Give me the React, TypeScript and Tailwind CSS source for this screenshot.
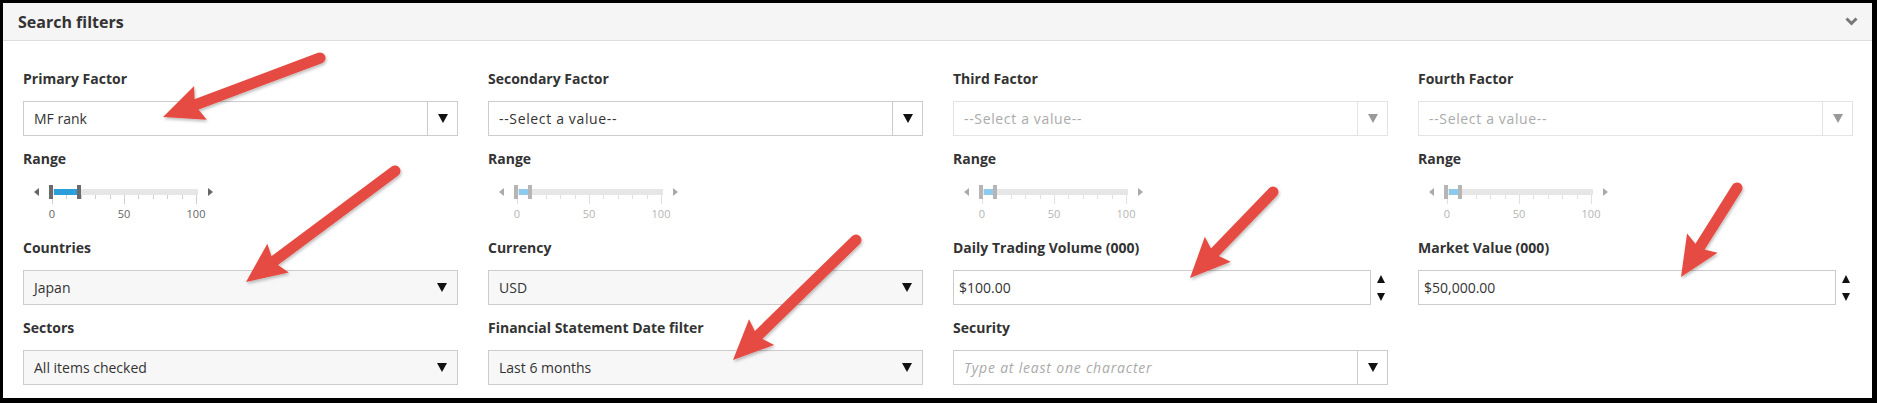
import React from "react";

const FONT = { fontFamily: '"Open Sans", "Liberation Sans", Arial, sans-serif' };

function Tri({ dir, color, w = 10, h = 9 }: { dir: "down" | "up" | "left" | "right"; color: string; w?: number; h?: number }) {
  let pts = "";
  if (dir === "down") pts = `0,0 ${w},0 ${w / 2},${h}`;
  if (dir === "up") pts = `0,${h} ${w},${h} ${w / 2},0`;
  if (dir === "left") pts = `${w},0 ${w},${h} 0,${h / 2}`;
  if (dir === "right") pts = `0,0 0,${h} ${w},${h / 2}`;
  return (
    <svg width={w} height={h} viewBox={`0 0 ${w} ${h}`} className="block shrink-0">
      <polygon points={pts} fill={color} />
    </svg>
  );
}

function Label({ children }: { children: React.ReactNode }) {
  return <div className="h-5 leading-5 text-[14px] font-bold text-[#333] mb-3 whitespace-nowrap">{children}</div>;
}

type Variant = "divider" | "disabled" | "gray";

function SelectBox({ value, variant, italic, wide }: { value: string; variant: Variant; italic?: boolean; wide?: boolean }) {
  const isGray = variant === "gray";
  const isDis = variant === "disabled";
  return (
    <div
      className={
        "h-[35px] flex items-stretch border " +
        (isDis ? "border-[#e3e3e3] bg-white" : isGray ? "border-[#cccccc] bg-[#f7f7f7]" : "border-[#cccccc] bg-white")
      }
    >
      <div
        className={
          "flex-1 flex items-center pl-[10px] text-[14px] whitespace-nowrap " +
          (italic ? "italic text-[#aaaaaa] tracking-[0.8px] " : isDis ? "text-[#aaaaaa] " : "text-[#333] ") +
          (wide ? "tracking-[0.65px]" : "")
        }
      >
        {value}
      </div>
      <div
        className={
          "w-[30px] flex items-center justify-center " +
          (isGray ? "" : isDis ? "border-l border-[#e3e3e3]" : "border-l border-[#cccccc]")
        }
      >
        <Tri dir="down" color={isDis ? "#999999" : "#111111"} w={10} h={9} />
      </div>
    </div>
  );
}

function NumberBox({ value }: { value: string }) {
  return (
    <div className="h-[35px] flex items-stretch">
      <div className="flex-1 border border-[#cccccc] bg-white flex items-center pl-[5px] text-[14px] text-[#333]">{value}</div>
      <div className="w-[17px] flex flex-col items-center justify-between pl-[2px] pt-[5px] pb-[4px]">
        <Tri dir="up" color="#111111" w={8} h={8} />
        <Tri dir="down" color="#111111" w={8} h={8} />
      </div>
    </div>
  );
}

function Slider({ enabled }: { enabled: boolean }) {
  const handle = enabled ? "#6b6b6b" : "#b5b5b5";
  const fill = enabled ? "#2b9fd9" : "#8ccbee";
  const arrow = enabled ? "#666666" : "#aaaaaa";
  const txt = enabled ? "#666666" : "#b5b5b5";
  const tickCol = enabled ? "#cfcfcf" : "#e0e0e0";
  const x0 = 29;
  const x1 = 173;
  const rightHandle = enabled ? 54 : 40;
  const ticks = Array.from({ length: 11 }, (_, i) => x0 + ((x1 - x0) * i) / 10);
  return (
    <svg width={200} height={56} viewBox="0 0 200 56" className="block" style={FONT}>
      <polygon points="16,19 16,27 11,23" fill={arrow} />
      <polygon points="185,19 185,27 190,23" fill={arrow} />
      <rect x={27} y={20} width={148} height={6} fill="#e6e6e6" />
      {ticks.map((t, i) => (
        <rect key={i} x={Math.round(t)} y={26} width={1} height={i % 5 === 0 ? 9 : 4} fill={tickCol} />
      ))}
      <rect x={31} y={20} width={rightHandle - 31} height={6} fill={fill} />
      <rect x={26} y={16} width={4} height={14} fill={handle} />
      <rect x={rightHandle} y={16} width={4} height={14} fill={handle} />
      <text x={x0} y={49} fontSize={11} fill={txt} textAnchor="middle">0</text>
      <text x={(x0 + x1) / 2} y={49} fontSize={11} fill={txt} textAnchor="middle">50</text>
      <text x={x1} y={49} fontSize={11} fill={txt} textAnchor="middle">100</text>
    </svg>
  );
}

function RangeField({ enabled }: { enabled: boolean }) {
  return (
    <div>
      <div className="h-5 leading-5 text-[14px] font-bold text-[#333]">Range</div>
      <Slider enabled={enabled} />
    </div>
  );
}

const ARROWS: [number, number, number, number][] = [
  [320, 58, 163, 117],
  [395, 171, 246, 282],
  [856, 240, 733, 360],
  [1273, 192, 1190, 278],
  [1737, 188, 1681, 277],
];

function RedArrows() {
  return (
    <svg width={1877} height={403} viewBox="0 0 1877 403" className="absolute left-0 top-0 pointer-events-none">
      <defs>
        <filter id="sh" x="-20%" y="-20%" width="140%" height="140%">
          <feDropShadow dx="1" dy="2" stdDeviation="1.5" floodColor="#000" floodOpacity="0.25" />
        </filter>
      </defs>
      {ARROWS.map(([tx, ty, hx, hy], i) => {
        const dx = hx - tx;
        const dy = hy - ty;
        const len = Math.hypot(dx, dy);
        const ux = dx / len;
        const uy = dy / len;
        const L = 40;
        const W = 18;
        const bx = hx - ux * L;
        const by = hy - uy * L;
        const px = -uy;
        const py = ux;
        const nx = bx + ux * 6;
        const ny = by + uy * 6;
        const pts = `${hx},${hy} ${bx + px * W},${by + py * W} ${nx},${ny} ${bx - px * W},${by - py * W}`;
        return (
          <g key={i} filter="url(#sh)">
            <line x1={tx} y1={ty} x2={bx + ux * 8} y2={by + uy * 8} stroke="#e54b42" strokeWidth={11} strokeLinecap="round" />
            <polygon points={pts} fill="#e54b42" />
          </g>
        );
      })}
    </svg>
  );
}

export default function App() {
  return (
    <div className="relative w-[1877px] h-[403px] bg-black pl-[3px] pt-[3px]" style={FONT}>
      <div className="w-[1869px] h-[395px] bg-white flex flex-col">
        <div className="h-[38px] shrink-0 bg-[#f5f5f5] border-b border-[#dddddd] flex items-center justify-between pl-[15px] pr-[14px]">
          <div className="text-[16px] font-bold text-[#333]">Search filters</div>
          <svg width={13} height={9} viewBox="0 0 13 9" className="block">
            <polyline points="1.5,1.5 6.5,6.5 11.5,1.5" fill="none" stroke="#777777" strokeWidth={3} />
          </svg>
        </div>
        <div className="grid grid-cols-4 gap-x-[30px] gap-y-[13px] pl-[20px] pr-[19px] pt-[28px]">
          <div>
            <Label>Primary Factor</Label>
            <SelectBox value="MF rank" variant="divider" />
          </div>
          <div>
            <Label>Secondary Factor</Label>
            <SelectBox value="--Select a value--" variant="divider" wide />
          </div>
          <div>
            <Label>Third Factor</Label>
            <SelectBox value="--Select a value--" variant="disabled" wide />
          </div>
          <div>
            <Label>Fourth Factor</Label>
            <SelectBox value="--Select a value--" variant="disabled" wide />
          </div>

          <RangeField enabled={true} />
          <RangeField enabled={false} />
          <RangeField enabled={false} />
          <RangeField enabled={false} />

          <div>
            <Label>Countries</Label>
            <SelectBox value="Japan" variant="gray" />
          </div>
          <div>
            <Label>Currency</Label>
            <SelectBox value="USD" variant="gray" />
          </div>
          <div>
            <Label>Daily Trading Volume (000)</Label>
            <NumberBox value="$100.00" />
          </div>
          <div>
            <Label>Market Value (000)</Label>
            <NumberBox value="$50,000.00" />
          </div>

          <div>
            <Label>Sectors</Label>
            <SelectBox value="All items checked" variant="gray" />
          </div>
          <div>
            <Label>Financial Statement Date filter</Label>
            <SelectBox value="Last 6 months" variant="gray" />
          </div>
          <div>
            <Label>Security</Label>
            <SelectBox value="Type at least one character" variant="divider" italic />
          </div>
          <div />
        </div>
      </div>
      <RedArrows />
    </div>
  );
}
